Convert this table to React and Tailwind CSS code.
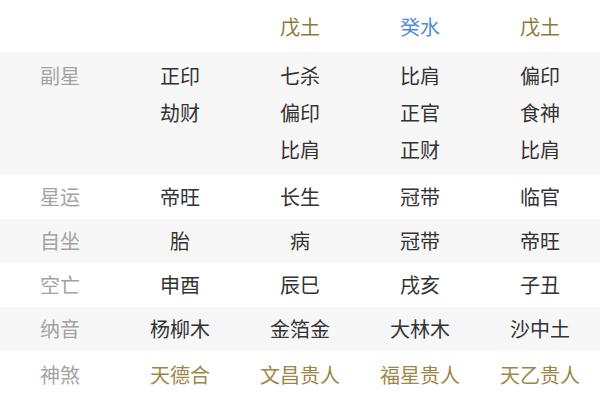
import React from "react";

const FONT = { fontFamily: '"Noto Sans CJK SC", "Noto Sans", sans-serif' };

// 颜色
const C = {
  text: "text-[#333333]",
  label: "text-[#a3a3a3]",
  earth: "text-[#8a7b3c]",
  water: "text-[#4f8ae0]",
  gold: "text-[#9d8748]",
  faint: "text-[#d9cb9c]",
};

const rows = [
  {
    label: "",
    multi: true,
    bg: "bg-white",
    first: true,
    cells: [
      null,
      [["丁火", C.faint], ["", ""]],
      [["乙木", C.faint], ["戊土", C.earth]],
      [["辛金", C.faint], ["癸水", C.water]],
      [["乙木", C.faint], ["戊土", C.earth]],
    ],
  },
  {
    label: "副星",
    multi: true,
    bg: "bg-[#f7f7f7]",
    cells: [
      null,
      [["正印"], ["劫财"]],
      [["七杀"], ["偏印"], ["比肩"]],
      [["比肩"], ["正官"], ["正财"]],
      [["偏印"], ["食神"], ["比肩"]],
    ],
  },
  { label: "星运", bg: "bg-white", cells: ["帝旺", "长生", "冠带", "临官"] },
  { label: "自坐", bg: "bg-[#f7f7f7]", cells: ["胎", "病", "冠带", "帝旺"] },
  { label: "空亡", bg: "bg-white", cells: ["申酉", "辰巳", "戌亥", "子丑"] },
  { label: "纳音", bg: "bg-[#f7f7f7]", cells: ["杨柳木", "金箔金", "大林木", "沙中土"] },
  {
    label: "神煞",
    multi: true,
    bg: "bg-white",
    cells: [
      null,
      [["天德合", C.gold], ["太极贵人", C.gold]],
      [["文昌贵人", C.gold], ["天德贵人", C.gold]],
      [["福星贵人", C.gold], ["国印贵人", C.gold]],
      [["天乙贵人", C.gold], ["太极贵人", C.gold]],
    ],
  },
];

const MultiRow = ({ row }) => (
  <div
    className={`grid grid-cols-5 ${row.bg} ${row.first ? "-mt-[34px]" : ""} pt-[5px] pb-[7px] leading-[37px]`}
  >
    <div className={`text-center ${C.label}`}>{row.label}</div>
    {row.cells.slice(1).map((lines, i) => (
      <div key={i} className="flex flex-col items-center">
        {lines.map(([t, color], j) => (
          <span key={j} className={`h-[37px] ${color || C.text}`}>
            {t || "\u00a0"}
          </span>
        ))}
      </div>
    ))}
  </div>
);

const SingleRow = ({ row }) => (
  <div className={`grid grid-cols-5 h-[44px] leading-[44px] ${row.bg}`}>
    <div className={`text-center ${C.label}`}>{row.label}</div>
    {row.cells.map((t, i) => (
      <div key={i} className={`text-center ${C.text}`}>
        {t}
      </div>
    ))}
  </div>
);

export default function App() {
  return (
    <div className="w-[600px] h-[400px] overflow-hidden bg-white text-[20px]" style={FONT}>
      {rows.map((row, i) =>
        row.multi ? <MultiRow key={i} row={row} /> : <SingleRow key={i} row={row} />
      )}
    </div>
  );
}
